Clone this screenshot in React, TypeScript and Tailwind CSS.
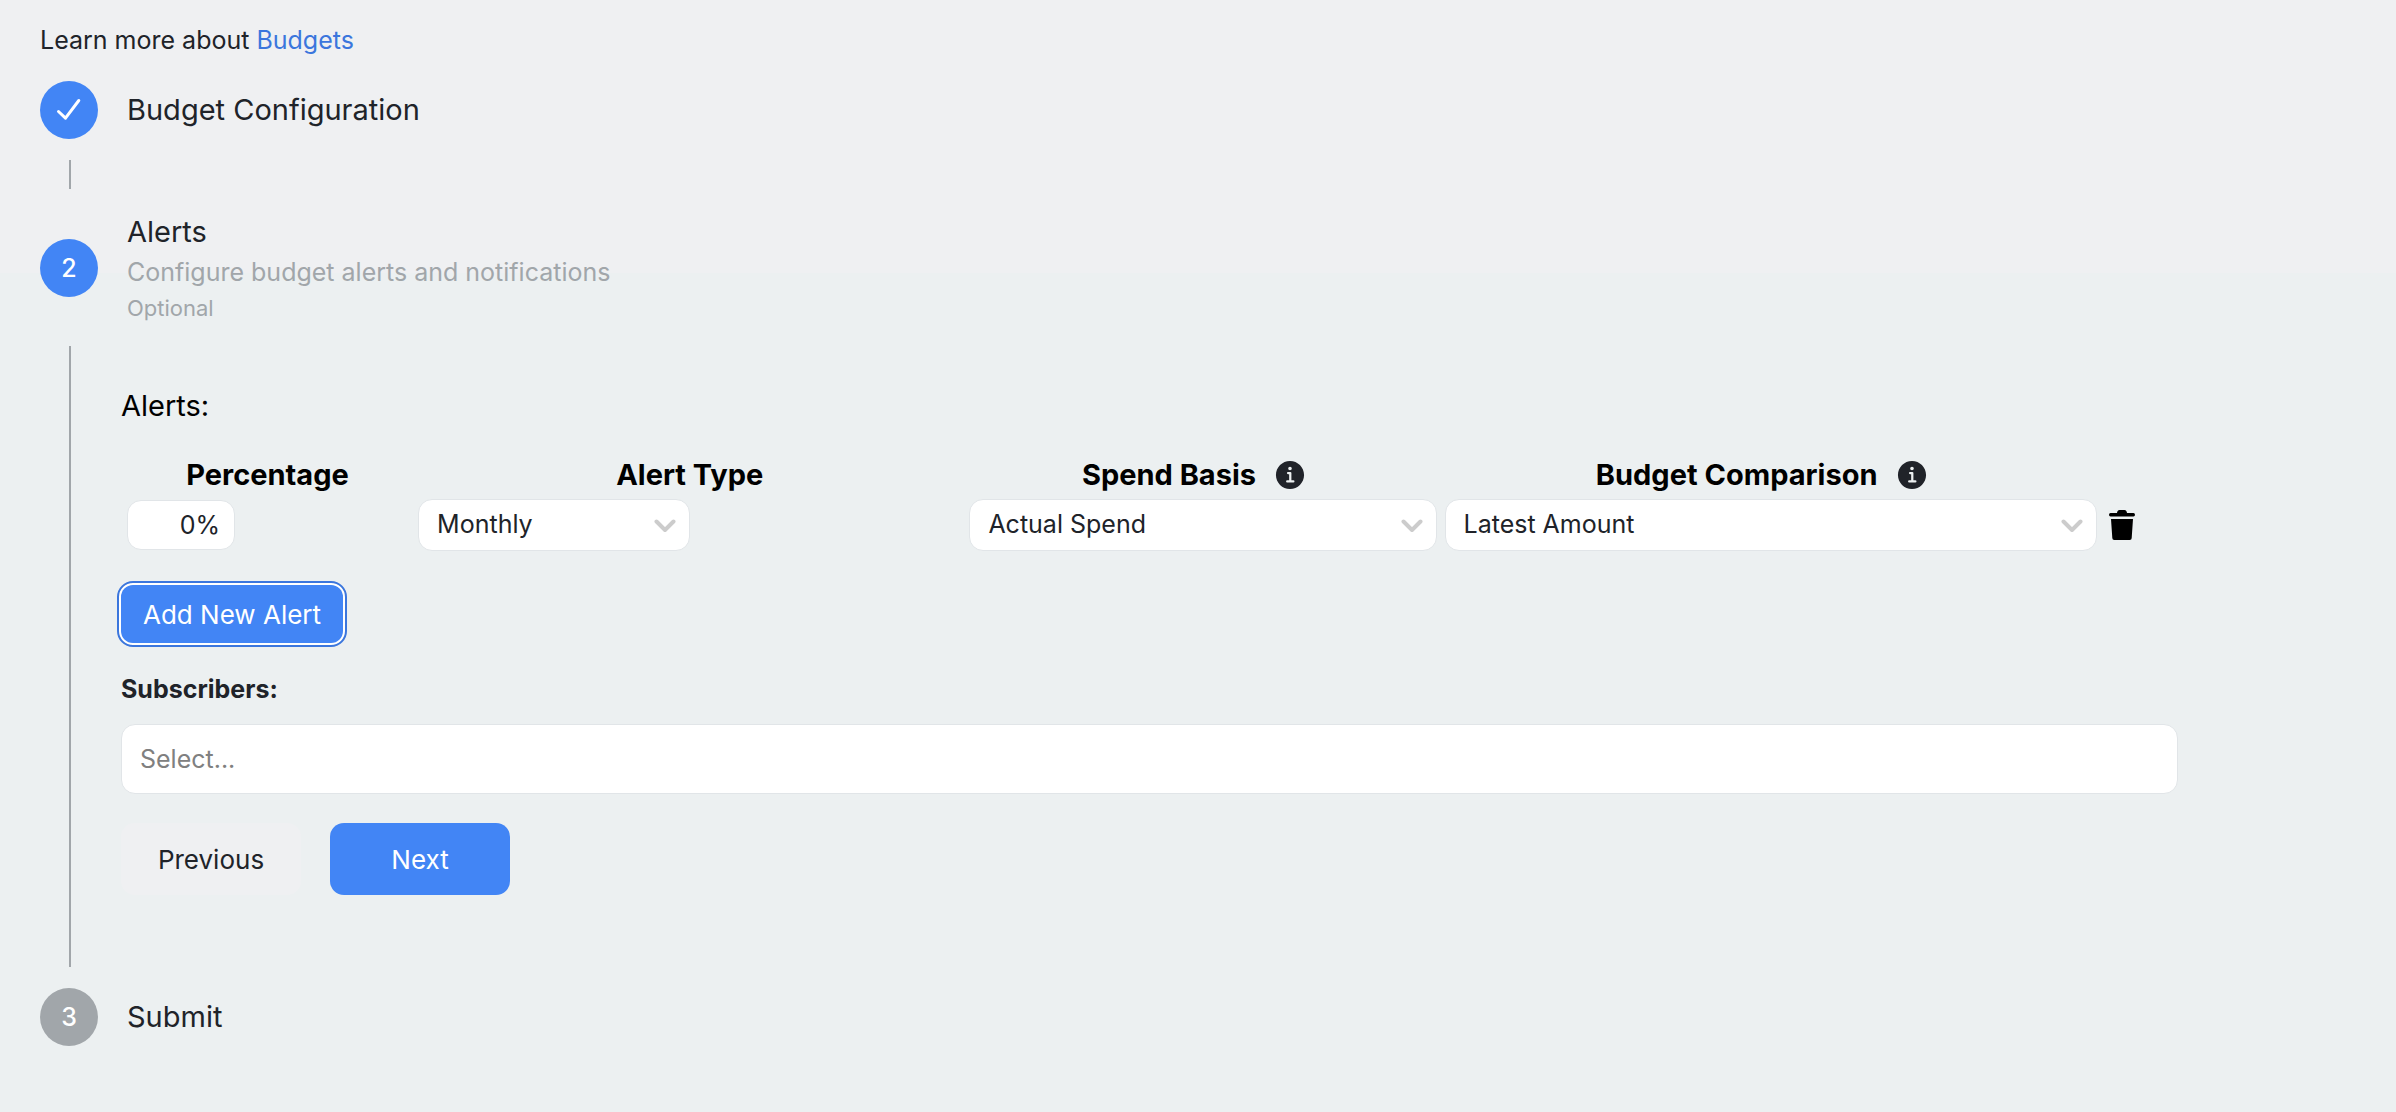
import React from 'react';
import { IoInformationCircle } from 'react-icons/io5';

interface StepProps {
  marker: React.ReactNode;
  title: string;
  description?: string;
  note?: string;
  pending?: boolean;
}

const Step = ({ marker, title, description, note, pending }: StepProps) => (
  <div className="flex items-center gap-[29px]">
    <div
      className={`flex h-[58px] w-[58px] shrink-0 items-center justify-center rounded-full text-[25px] leading-none font-medium text-white ${
        pending ? 'bg-[#a1a6aa]' : 'bg-[#4285f5]'
      }`}
    >
      {marker}
    </div>
    <div>
      <h2 className="text-[29px] leading-[40px]">{title}</h2>
      {description && <p className="text-[25px] leading-[40px] text-[#a1a6aa]">{description}</p>}
      {note && <p className="text-[22px] leading-[32px] text-[#a1a6aa]">{note}</p>}
    </div>
  </div>
);

interface SelectBoxProps {
  label: string;
  value: string;
  className: string;
}

const SelectBox = ({ label, value, className }: SelectBoxProps) => (
  <div className={`relative ${className}`}>
    <select
      aria-label={label}
      className="h-[52px] w-full appearance-none rounded-[14px] border border-[#e1e5e8] bg-white pr-12 pl-[18px] text-[25px]"
    >
      <option>{value}</option>
    </select>
    <svg
      viewBox="0 0 22 14"
      className="pointer-events-none absolute top-5 right-3.5 h-3.5 w-[22px]"
      fill="none"
      stroke="#cccccc"
      strokeWidth="4"
      strokeLinecap="round"
      strokeLinejoin="round"
    >
      <path d="M2.5 2.5 11 11l8.5-8.5" />
    </svg>
  </div>
);

const CheckIcon = () => (
  <svg
    viewBox="0 0 28 28"
    className="h-7 w-7"
    fill="none"
    stroke="currentColor"
    strokeWidth="3"
    strokeLinecap="round"
    strokeLinejoin="round"
  >
    <path d="M3.500 15.500 10.500 22.200 23.800 4.500" />
  </svg>
);

const TrashIcon = () => (
  <svg viewBox="0 0 26 30" className="h-[30px] w-[26px]" fill="currentColor">
    <path d="M10.500 0h5C17 0 18 1.500 18 3h6.500a1.500 1.700 0 0 1 0 3.400h-23a1.500 1.700 0 0 1 0-3.400H8C8 1.500 9 0 10.500 0ZM2 9h22l-1.300 19a2 2 0 0 1-2 2H5.300a2 2 0 0 1-2-2Z" />
  </svg>
);

const InfoHeading = ({ children }: { children: React.ReactNode }) => (
  <span className="inline-flex items-center gap-4 pr-4">
    {children}
    <IoInformationCircle className="h-9 w-9 text-[#202329]" />
  </span>
);

export default function App() {
  return (
    <div className="min-h-screen bg-[#ecf0f1] bg-[linear-gradient(#eff0f2,#eff0f2)] bg-[length:100%_273px] bg-no-repeat px-10 pt-5 pb-[60px] font-['Inter',sans-serif] text-[25px] text-[#202329]">
      <p className="mb-[21px] leading-[40px]">
        Learn more about{' '}
        <a href="#budgets" className="text-[#3b76dd]">
          Budgets
        </a>
      </p>

      <Step marker={<CheckIcon />} title="Budget Configuration" />
      <div className="mt-[21px] mb-[23px] ml-[29px] h-[29px] w-0.5 bg-[#a1a6aa]" />
      <Step marker="2" title="Alerts" description="Configure budget alerts and notifications" note="Optional" />

      <div className="mt-[22px] mb-[21px] ml-[29px] border-l-2 border-[#a1a6aa] pt-10 pr-[178px] pb-[72px] pl-[50px]">
        <h3 className="text-[29px] leading-[40px] text-black">Alerts:</h3>

        <table className="mt-[25px] w-full table-fixed border-separate border-spacing-0">
          <colgroup>
            <col className="w-[14.25%]" />
            <col className="w-[26.8%]" />
            <col className="w-[23.1%]" />
            <col className="w-[32.1%]" />
            <col />
          </colgroup>
          <thead>
            <tr className="h-12 text-[29px] leading-[48px] text-black">
              <th className="p-0">Percentage</th>
              <th className="p-0">Alert Type</th>
              <th className="p-0 align-top">
                <InfoHeading>Spend Basis</InfoHeading>
              </th>
              <th className="p-0 align-top">
                <InfoHeading>Budget Comparison</InfoHeading>
              </th>
              <th />
            </tr>
          </thead>
          <tbody>
            <tr>
              <td className="px-1.5">
                <input
                  aria-label="Percentage"
                  defaultValue="0%"
                  className="block h-[50px] w-[108px] rounded-[14px] border border-[#e1e5e8] bg-white px-3.5 text-right"
                />
              </td>
              <td className="px-1">
                <SelectBox label="Alert Type" value="Monthly" className="w-[272px]" />
              </td>
              <td className="px-1">
                <SelectBox label="Spend Basis" value="Actual Spend" className="w-full" />
              </td>
              <td className="px-1">
                <SelectBox label="Budget Comparison" value="Latest Amount" className="w-full" />
              </td>
              <td className="pl-2">
                <button aria-label="Delete alert" className="block text-black">
                  <TrashIcon />
                </button>
              </td>
            </tr>
          </tbody>
        </table>

        <button className="mt-[34px] block h-[58px] rounded-[12px] bg-[#4285f5] px-[22px] text-[26px] text-white ring-2 ring-white outline-2 outline-offset-2 outline-[#3b76dd]">
          Add New Alert
        </button>

        <label htmlFor="subscribers" className="mt-[26px] block leading-[40px] font-bold">
          Subscribers:
        </label>
        <input
          id="subscribers"
          placeholder="Select..."
          className="mt-[15px] block h-[70px] w-full rounded-[14px] border border-[#e1e5e8] bg-white px-[18px] placeholder:text-[#808080]"
        />

        <div className="mt-[29px] flex gap-[29px]">
          <button className="h-[72px] w-[180px] rounded-[14px] bg-[#eff0f2] text-[26px]">Previous</button>
          <button className="h-[72px] w-[180px] rounded-[14px] bg-[#4285f5] text-[26px] text-white">Next</button>
        </div>
      </div>

      <Step marker="3" title="Submit" pending />
    </div>
  );
}
